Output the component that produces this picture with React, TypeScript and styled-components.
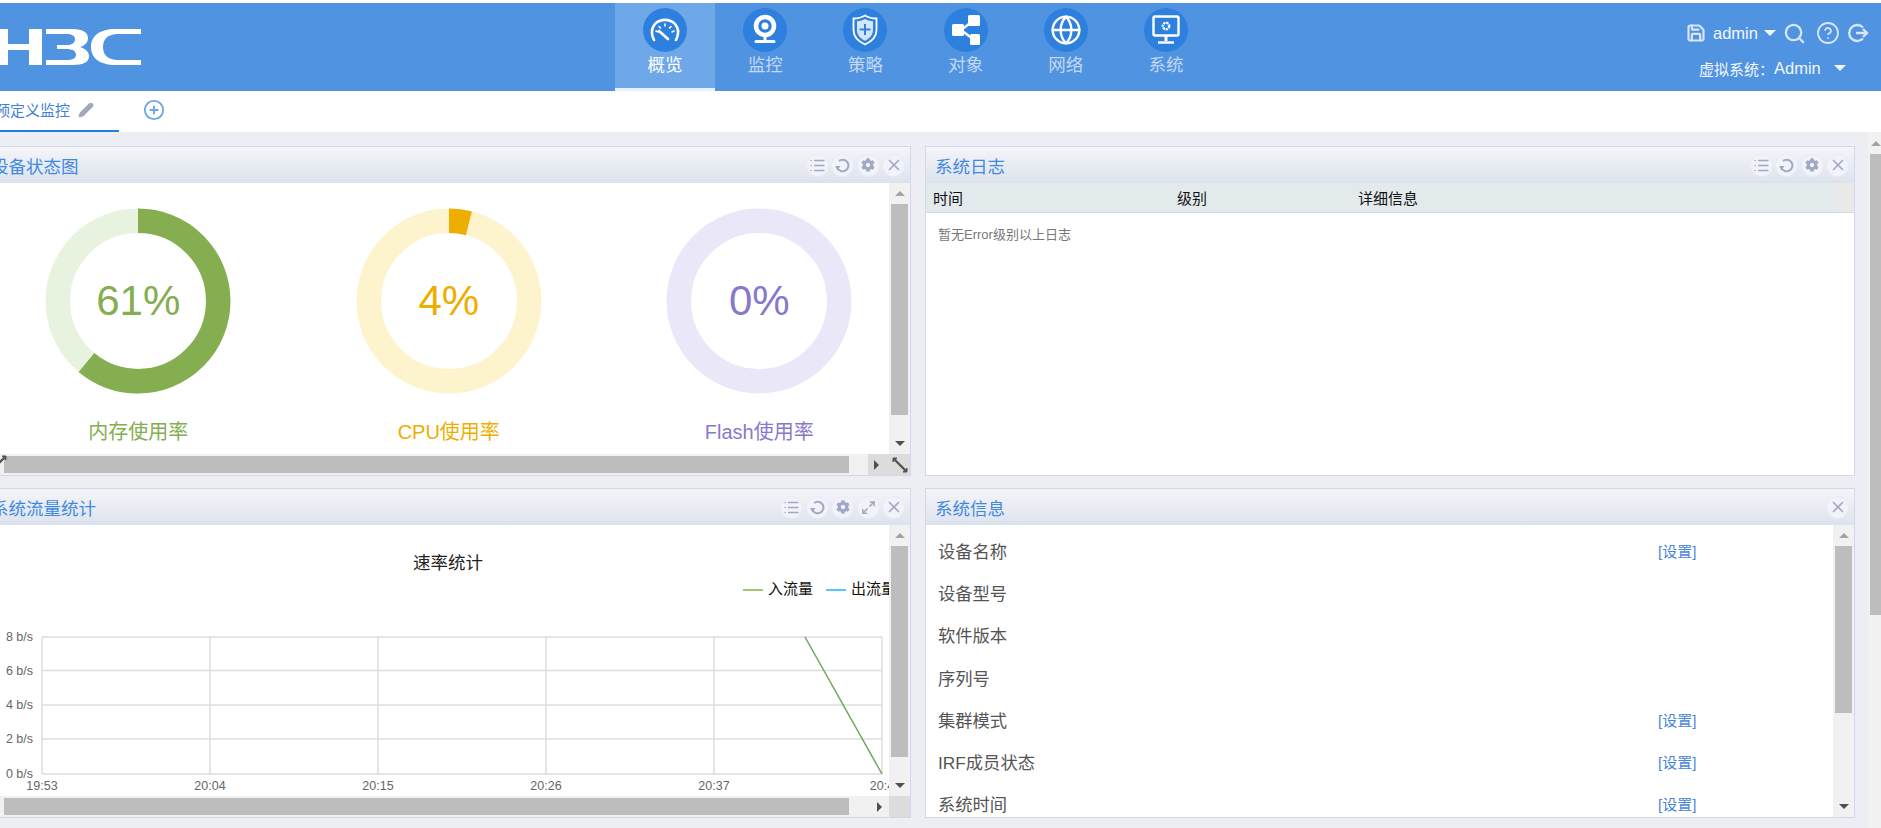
import React from 'react';
import styled, { createGlobalStyle } from 'styled-components';
import { FaCog } from 'react-icons/fa';
import { Globe, List, Maximize2, Pencil, Save, Search, X, CircleHelp, CirclePlus } from 'lucide-react';

const GlobalStyle = createGlobalStyle`
  html, body { margin: 0; padding: 0; height: 100%; overflow: hidden; background: #fff; }
  body { font-family: "Liberation Sans", "Noto Sans CJK SC", sans-serif; }
`;

const Page = styled.div`
  width: 1881px;
  height: 828px;
  padding-top: 3px;
  box-sizing: border-box;
  display: flex;
  flex-direction: column;
  overflow: hidden;
`;

/* top bar */
const TopBar = styled.header`
  height: 88px;
  flex: none;
  background: #5093e1;
  display: flex;
  color: #fff;
`;
const Logo = styled.svg`
  width: 150px;
  height: 88px;
  flex: none;
`;
const Nav = styled.nav`
  margin-left: 465px;
  display: flex;
`;
const NavItem = styled.div<{ $active?: boolean }>`
  width: 100.2px;
  height: 88px;
  box-sizing: border-box;
  padding-top: 5px;
  display: flex;
  flex-direction: column;
  align-items: center;
  background: ${(p) => (p.$active ? '#6ea8e8' : 'transparent')};
  border-bottom: 3px solid ${(p) => (p.$active ? '#e9f3fe' : 'transparent')};
  color: ${(p) => (p.$active ? '#fff' : '#c3d8f3')};
  font-size: 17.5px;
  line-height: 26px;
`;
const NavBadge = styled.div`
  width: 44px;
  height: 44px;
  border-radius: 50%;
  background: #2e80df;
  display: flex;
  align-items: center;
  justify-content: center;
`;
const UserArea = styled.div`
  margin-left: auto;
  width: 193px;
  flex: none;
  display: flex;
  flex-direction: column;
  font-size: 16.5px;
`;
const UserRow = styled.div`
  display: flex;
  align-items: center;
  height: 20px;
  margin-top: 20px;
  color: #f2f7fd;
`;
const SystemRow = styled(UserRow)`
  margin-top: 15px;
  padding-left: 11px;
  font-size: 15px;
`;
const SystemName = styled.span`
  font-size: 16.5px;
`;
const Caret = styled.span<{ $gap: number }>`
  width: 0;
  height: 0;
  margin-left: ${(p) => p.$gap}px;
  border-left: 6.5px solid transparent;
  border-right: 6.5px solid transparent;
  border-top: 6px solid #f2f7fd;
`;
const UserName = styled.span`
  margin-left: 7px;
`;
const ToolIcon = styled.span<{ $gap: number }>`
  display: flex;
  margin-left: ${(p) => p.$gap}px;
  color: #d7e6f8;
`;

/* tabs */
const TabBar = styled.div`
  height: 41px;
  flex: none;
  display: flex;
  align-items: flex-start;
  background: #fff;
`;
const ActiveTab = styled.div`
  width: 119px;
  height: 41px;
  box-sizing: border-box;
  border-bottom: 2px solid #1f7fe6;
  display: flex;
  align-items: center;
  gap: 8px;
  color: #3f7fd6;
  font-size: 15px;
  overflow: hidden;
  padding-bottom: 2px;
`;
const TabName = styled.span`
  margin-left: -5px;
  white-space: nowrap;
`;
const AddTab = styled.div`
  margin-left: 24px;
  height: 37px;
  display: flex;
  align-items: center;
  color: #6fa6e6;
`;

/* main area */
const Main = styled.main`
  flex: 1;
  min-height: 0;
  background: #eceef3;
  display: flex;
`;
const Grid = styled.div`
  margin-left: -19px;
  padding-top: 14px;
  display: grid;
  grid-template-columns: 930px 930px;
  grid-template-rows: 330px 330px;
  column-gap: 14px;
  row-gap: 12px;
`;
const PageScroll = styled.div`
  margin-left: auto;
  width: 13px;
  background: #f1f1f1;
  display: flex;
  flex-direction: column;
  align-items: flex-end;
`;
const PageUp = styled.div`
  width: 11px;
  height: 22px;
  display: flex;
  align-items: center;
  justify-content: center;
`;
const PageThumb = styled.div`
  width: 11px;
  height: 461px;
  background: #bdbdbd;
`;

const Panel = styled.section`
  border: 1px solid #d2d8ea;
  background: #fff;
  display: flex;
  flex-direction: column;
  overflow: hidden;
  min-width: 0;
`;
const PanelHead = styled.div`
  height: 36px;
  flex: none;
  box-sizing: border-box;
  padding: 0 5px 0 9px;
  display: flex;
  align-items: center;
  background: linear-gradient(#f5f5f9, #dce2ed);
`;
const PanelTitle = styled.h2`
  margin: 0 auto 0 0;
  font-size: 17.5px;
  font-weight: 400;
  color: #3f8ae0;
`;
const RoundButton = styled.span`
  width: 23px;
  height: 23px;
  margin-left: 2.4px;
  border-radius: 50%;
  box-sizing: border-box;
  border: 1px solid #e8ebf3;
  background: #f2f3f8;
  color: #a0a8c6;
  display: flex;
  align-items: center;
  justify-content: center;
`;
const PanelBody = styled.div`
  flex: 1;
  min-height: 0;
  display: flex;
`;
const PanelContent = styled.div`
  flex: 1;
  min-width: 0;
  overflow: hidden;
`;

/* fake scrollbars */
const VScroll = styled.div`
  width: 21px;
  flex: none;
  background: #f1f1f1;
  display: flex;
  flex-direction: column;
  align-items: center;
`;
const ScrollBtn = styled.div`
  width: 21px;
  height: 21px;
  flex: none;
  display: flex;
  align-items: center;
  justify-content: center;
`;
const VThumb = styled.div<{ $h: number }>`
  width: 17px;
  height: ${(p) => p.$h}px;
  flex: none;
  background: #bdbdbd;
`;
const Spacer = styled.div`
  flex: 1;
`;
const TriUp = styled.span<{ $light?: boolean }>`
  border-left: 5px solid transparent;
  border-right: 5px solid transparent;
  border-bottom: 5px solid ${(p) => (p.$light ? '#a3a3a3' : '#505050')};
`;
const TriDown = styled.span`
  border-left: 5px solid transparent;
  border-right: 5px solid transparent;
  border-top: 5px solid #505050;
`;
const TriRight = styled.span`
  border-top: 5px solid transparent;
  border-bottom: 5px solid transparent;
  border-left: 5px solid #505050;
`;
const HScroll = styled.div`
  height: 21px;
  flex: none;
  background: #f1f1f1;
  display: flex;
  align-items: center;
  position: relative;
`;
const HThumb = styled.div`
  width: 845px;
  height: 17px;
  flex: none;
  margin-left: 22px;
  background: #bdbdbd;
`;
const HArrow = styled.div`
  margin-left: 25px;
  width: 10px;
  display: flex;
  justify-content: center;
`;
const ResizeCorner = styled.div`
  align-self: stretch;
  width: 21px;
  flex: none;
  background: #dcdcdc;
  display: flex;
  align-items: center;
  justify-content: center;
  color: #555;
`;
const ArrowCorner = styled(ResizeCorner)`
  width: 21px;
  margin-left: auto;
  padding-right: 4px;
  box-sizing: border-box;
`;
const HSpace = styled.div`
  flex: 1;
`;
const LeftGrip = styled.span`
  position: absolute;
  left: 9px;
  top: 1px;
  display: flex;
  color: #555;
  transform: scaleX(-1);
`;

/* gauges */
const GaugeRow = styled.div`
  display: flex;
  padding-left: 1px;
  width: 932px;
`;
const GaugeCell = styled.div<{ $color: string }>`
  width: 310.5px;
  flex: none;
  height: 250px;
  padding-top: 25px;
  display: flex;
  flex-direction: column;
  align-items: center;
  color: ${(p) => p.$color};
`;
const GaugeDial = styled.div`
  width: 186px;
  height: 186px;
  position: relative;
`;
const GaugeValue = styled.div`
  position: absolute;
  inset: 0;
  display: flex;
  align-items: center;
  justify-content: center;
  font-size: 42px;
`;
const GaugeLabel = styled.div`
  margin-top: 24px;
  line-height: 28px;
  font-size: 20px;
`;

/* log table */
const TableHead = styled.div`
  height: 30px;
  flex: none;
  box-sizing: border-box;
  border-bottom: 1px solid #d2d8ea;
  background: #e3eaec;
  display: grid;
  grid-template-columns: 244px 181px 1fr 20px;
  align-items: center;
  font-size: 15px;
  color: #111;
`;
const TableCell = styled.div`
  padding-left: 7px;
`;
const TableEnd = styled.div`
  align-self: stretch;
  background: #e9e9e9;
`;
const EmptyText = styled.div`
  margin: 12px 0 0 12px;
  font-size: 13px;
  line-height: 20px;
  color: #777;
`;

/* system info */
const InfoList = styled.div`
  padding: 4px 0 0 12px;
`;
const InfoRow = styled.div`
  height: 42.3px;
  display: flex;
  align-items: center;
  font-size: 17.3px;
  color: #555;
`;
const InfoName = styled.span`
  width: 720px;
  flex: none;
`;
const InfoLink = styled.span`
  font-size: 15px;
  color: #4a86d8;
`;

const ChartText = styled.text`
  font-family: "Liberation Sans", "Noto Sans CJK SC", sans-serif;
`;
const ChartSvg = styled.svg`
  display: block;
  width: 909px;
  height: 271px;
`;

const GaugeIcon = () => (
  <svg width="30" height="26" viewBox="0 0 30 26" fill="none" stroke="#fff" strokeWidth="2.2" strokeLinecap="round">
    <path d="M4 23C1 17 1.500 11 5 7c5-5.500 15-5.500 20 0 3.500 4 4 10 1 16" strokeWidth="2.600" />
    <path d="M6 14l2 1M9 9.500l1.500 1.500M15 7v2M21 9.500L19.500 11M24 14l-2 1" strokeWidth="1.600" />
    <path d="M9 14l9 8" strokeWidth="2.600" />
  </svg>
);
const CamIcon = () => (
  <svg width="28" height="32" viewBox="0 0 28 32" fill="none">
    <circle cx="14" cy="12" r="9" stroke="#fff" strokeWidth="4.500" />
    <circle cx="14" cy="12" r="3.500" fill="#fff" />
    <path d="M14 22v4" stroke="#fff" strokeWidth="3" />
    <path d="M5 27.500h18" stroke="#fff" strokeWidth="3" strokeLinecap="round" />
  </svg>
);
const ShieldIcon = () => (
  <svg width="26" height="32" viewBox="0 0 26 32" fill="none">
    <path d="M13 1.500C9 4 5 4.500 1.500 4.500V16c0 7 5 11.500 11.500 14.500C19.500 27.500 24.500 23 24.500 16V4.500C21 4.500 17 4 13 1.500z" stroke="#fff" strokeWidth="1.800" />
    <path d="M13 5c-3 1.700-5.500 2.200-8 2.200V16c0 5 3.500 8.500 8 10.800 4.500-2.300 8-5.800 8-10.800V7.200C18.500 7.200 16 6.700 13 5z" fill="#d6e6fa" />
    <path d="M13 10v11M7.500 15.500h11" stroke="#2e80df" strokeWidth="2" />
  </svg>
);
const ShareIcon = () => (
  <svg width="28" height="30" viewBox="0 0 28 30" fill="#fff">
    <path d="M9 15L21 6M9 15l12 9" stroke="#fff" strokeWidth="2.500" />
    <rect x="16" y="0" width="12" height="11" rx="1.500" />
    <rect x="0" y="9" width="12" height="12" rx="1.500" />
    <rect x="18" y="19" width="10" height="11" rx="1.500" />
  </svg>
);
const MonitorIcon = () => (
  <svg width="28" height="30" viewBox="0 0 28 30" fill="none">
    <rect x="1.500" y="1.500" width="25" height="19" rx="1.500" stroke="#fff" strokeWidth="2.400" />
    <circle cx="14" cy="11" r="3.200" stroke="#fff" strokeWidth="2.400" strokeDasharray="2.200 0.800" />
    <path d="M14 21v5" stroke="#fff" strokeWidth="3" />
    <path d="M6 27.500h16" stroke="#fff" strokeWidth="2.400" />
  </svg>
);

const navItems = [
  { label: '概览', icon: <GaugeIcon />, active: true },
  { label: '监控', icon: <CamIcon /> },
  { label: '策略', icon: <ShieldIcon /> },
  { label: '对象', icon: <ShareIcon /> },
  { label: '网络', icon: <Globe size={32} color="#fff" strokeWidth={1.800} /> },
  { label: '系统', icon: <MonitorIcon /> },
];

const RefreshIcon = () => (
  <svg width="15" height="15" viewBox="0 0 15 15" fill="none" stroke="currentColor" strokeWidth="2">
    <path d="M4 3A5.800 5.800 0 1 1 2.200 9.500" />
    <path d="M0 8h5.500L2.500 12.500z" fill="currentColor" stroke="none" />
  </svg>
);
const LogoutIcon = () => (
  <svg width="22" height="20" viewBox="0 0 22 20" fill="none" stroke="#d7e6f8" strokeWidth="2.400">
    <path d="M16 4.500A8 8 0 1 0 16 15.500" />
    <path d="M9 10h11M16 6l4 4-4 4" />
  </svg>
);

const Resize = () => (
  <svg width="16" height="16" viewBox="0 0 16 16" fill="none" stroke="currentColor">
    <path d="M3 3l10 10" strokeWidth="2.400" />
    <path d="M1 5V1h4zM15 11v4h-4z" fill="currentColor" />
  </svg>
);

const PanelTools = ({ expand, only }: { expand?: boolean; only?: boolean }) => (
  <>
    {!only && (
      <>
        <RoundButton><List size={17} strokeWidth={2.200} /></RoundButton>
        <RoundButton><RefreshIcon /></RoundButton>
        <RoundButton><FaCog size={14} /></RoundButton>
        {expand && <RoundButton><Maximize2 size={15} strokeWidth={2.400} /></RoundButton>}
      </>
    )}
    <RoundButton><X size={18} strokeWidth={2.200} /></RoundButton>
  </>
);

const Bar = ({ thumb }: { thumb: number }) => (
  <VScroll>
    <ScrollBtn><TriUp $light /></ScrollBtn>
    <VThumb $h={thumb} />
    <Spacer />
    <ScrollBtn><TriDown /></ScrollBtn>
  </VScroll>
);

// ring drawn from a percentage, starting at 12 o'clock
const Gauge = ({ pct, color, track, label }: { pct: number; color: string; track: string; label: string }) => {
  const r = 80.200;
  const c = 2 * Math.PI * r;
  return (
    <GaugeCell $color={color}>
      <GaugeDial>
        <svg width="186" height="186" viewBox="0 0 186 186">
          <circle cx="93" cy="93" r={r} fill="none" stroke={track} strokeWidth="24.500" />
          {pct > 0 && (
            <circle
              cx="93"
              cy="93"
              r={r}
              fill="none"
              stroke={color}
              strokeWidth="24.500"
              strokeDasharray={`${(c * pct) / 100} ${c}`}
              transform="rotate(-90 93 93)"
            />
          )}
        </svg>
        <GaugeValue>{pct}%</GaugeValue>
      </GaugeDial>
      <GaugeLabel>{label}</GaugeLabel>
    </GaugeCell>
  );
};

const infoRows = [
  { name: '设备名称', link: true },
  { name: '设备型号' },
  { name: '软件版本' },
  { name: '序列号' },
  { name: '集群模式', link: true },
  { name: 'IRF成员状态', link: true },
  { name: '系统时间', link: true },
];

// x and y here are in page px minus the content origin (-18, 525)
const ox = 18;
const oy = -525;
const xLines = [42, 210, 378, 546, 714, 882];
const yLines = [637, 670.500, 705, 739, 774];
const yLabels = ['8 b/s', '6 b/s', '4 b/s', '2 b/s', '0 b/s'];
const xLabels = ['19:53', '20:04', '20:15', '20:26', '20:37', '20:4'];

const TrafficChart = () => (
  <ChartSvg viewBox="0 0 909 271">
    <g transform={`translate(${ox} ${oy})`}>
      <ChartText x="448" y="569" fontSize="17.500" textAnchor="middle" fill="#222">速率统计</ChartText>
      <line x1="743" x2="763" y1="590" y2="590" stroke="#85b53c" strokeWidth="1.500" />
      <ChartText x="768" y="594" fontSize="15" fill="#111">入流量</ChartText>
      <line x1="826" x2="846" y1="590" y2="590" stroke="#1fb2ff" strokeWidth="1.500" />
      <ChartText x="851" y="594" fontSize="15" fill="#111">出流量</ChartText>
      {yLines.map((y) => (
        <line key={y} x1="42" x2="882" y1={y} y2={y} stroke="#dddddd" strokeWidth="1.500" />
      ))}
      {xLines.map((x) => (
        <line key={x} x1={x} x2={x} y1="637" y2="774" stroke="#dddddd" strokeWidth="1.500" />
      ))}
      <line x1="805" y1="637" x2="882" y2="774" stroke="#6fa85a" strokeWidth="1.500" />
      {yLabels.map((t, i) => (
        <ChartText key={t} x="33" y={yLines[i] + 4} fontSize="12.500" textAnchor="end" fill="#666">{t}</ChartText>
      ))}
      {xLabels.map((t, i) => (
        <ChartText key={t} x={xLines[i]} y="790" fontSize="12.500" textAnchor="middle" fill="#666">{t}</ChartText>
      ))}
    </g>
  </ChartSvg>
);

const LogoMark = () => (
  <Logo viewBox="0 0 150 88">
    <g fill="#fff">
      <rect x="-5" y="26" width="13" height="36" />
      <rect x="29" y="26" width="13" height="36" />
      <rect x="0" y="41" width="32" height="6" />
      <path d="M46 26H72C84 26 88 30 88 35C88 40 84 43 80 44C84 45 89 48 89 53C89 59 84 62 72 62H46V57H66C73 57 76 55 76 52C76 48 73 46 66 46H57V42H66C72 42 75 40 75 36C75 33 72 31 66 31H46Z" />
      <path d="M141 26H116C98 26 91 34 91 44C91 54 98 62 116 62H141V57H118C108 57 103 52 103 44C103 36 108 31 118 31H141Z" />
    </g>
  </Logo>
);

export default function App() {
  return (
    <Page>
      <GlobalStyle />
      <TopBar>
        <LogoMark />
        <Nav>
          {navItems.map((n) => (
            <NavItem key={n.label} $active={n.active}>
              <NavBadge>{n.icon}</NavBadge>
              {n.label}
            </NavItem>
          ))}
        </Nav>
        <UserArea>
          <UserRow>
            <ToolIcon $gap={-2}><Save size={20} strokeWidth={2.600} /></ToolIcon>
            <UserName>admin</UserName>
            <Caret $gap={6} />
            <ToolIcon $gap={7}><Search size={23} strokeWidth={2.400} /></ToolIcon>
            <ToolIcon $gap={10}><CircleHelp size={24} strokeWidth={1.800} /></ToolIcon>
            <ToolIcon $gap={7}><LogoutIcon /></ToolIcon>
          </UserRow>
          <SystemRow>
            虚拟系统：<SystemName>Admin</SystemName>
            <Caret $gap={13} />
          </SystemRow>
        </UserArea>
      </TopBar>

      <TabBar>
        <ActiveTab>
          <TabName>预定义监控</TabName>
          <Pencil size={16} color="#a3a8b8" fill="#a3a8b8" />
        </ActiveTab>
        <AddTab><CirclePlus size={22} strokeWidth={2} /></AddTab>
      </TabBar>

      <Main>
        <Grid>
          <Panel>
            <PanelHead>
              <PanelTitle>设备状态图</PanelTitle>
              <PanelTools />
            </PanelHead>
            <PanelBody>
              <PanelContent>
                <GaugeRow>
                  <Gauge pct={61} color="#84ae50" track="#e8f3df" label="内存使用率" />
                  <Gauge pct={4} color="#eeae00" track="#fdf3cd" label="CPU使用率" />
                  <Gauge pct={0} color="#8878cc" track="#eae7f8" label="Flash使用率" />
                </GaugeRow>
              </PanelContent>
              <Bar thumb={211} />
            </PanelBody>
            <HScroll>
              <LeftGrip><Resize /></LeftGrip>
              <HThumb />
              <ArrowCorner><TriRight /></ArrowCorner>
              <ResizeCorner><Resize /></ResizeCorner>
            </HScroll>
          </Panel>

          <Panel>
            <PanelHead>
              <PanelTitle>系统日志</PanelTitle>
              <PanelTools />
            </PanelHead>
            <TableHead>
              <TableCell>时间</TableCell>
              <TableCell>级别</TableCell>
              <TableCell>详细信息</TableCell>
              <TableEnd />
            </TableHead>
            <EmptyText>暂无Error级别以上日志</EmptyText>
          </Panel>

          <Panel>
            <PanelHead>
              <PanelTitle>系统流量统计</PanelTitle>
              <PanelTools expand />
            </PanelHead>
            <PanelBody>
              <PanelContent>
                <TrafficChart />
              </PanelContent>
              <Bar thumb={211} />
            </PanelBody>
            <HScroll>
              <HThumb />
              <HArrow><TriRight /></HArrow>
              <HSpace />
              <ResizeCorner />
            </HScroll>
          </Panel>

          <Panel>
            <PanelHead>
              <PanelTitle>系统信息</PanelTitle>
              <PanelTools only />
            </PanelHead>
            <PanelBody>
              <PanelContent>
                <InfoList>
                  {infoRows.map((r) => (
                    <InfoRow key={r.name}>
                      <InfoName>{r.name}</InfoName>
                      {r.link && <InfoLink>[设置]</InfoLink>}
                    </InfoRow>
                  ))}
                </InfoList>
              </PanelContent>
              <Bar thumb={167} />
            </PanelBody>
          </Panel>
        </Grid>
        <PageScroll>
          <PageUp><TriUp $light /></PageUp>
          <PageThumb />
        </PageScroll>
      </Main>
    </Page>
  );
}
